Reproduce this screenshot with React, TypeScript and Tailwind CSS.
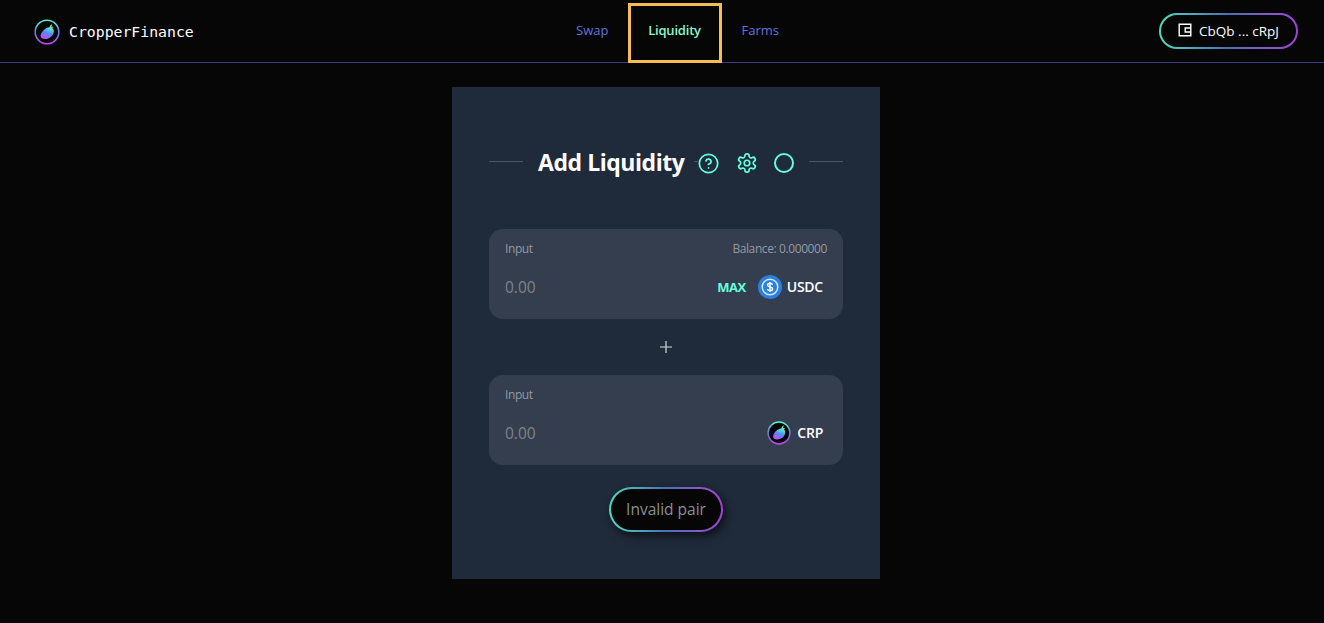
const font = "font-['Open_Sans','Noto_Sans',sans-serif]";

const Logo = ({ size, id }: { size: number; id: string }) => (
    <svg width={size} height={size} viewBox="0 0 26 26" fill="none">
        <defs>
            <linearGradient id={`${id}-ring`} x1="0" y1="0" x2="0" y2="1">
                <stop offset="0" stopColor="#5cf0c4" />
                <stop offset="0.5" stopColor="#5f80e4" />
                <stop offset="1" stopColor="#c045ee" />
            </linearGradient>
            <linearGradient id={`${id}-fruit`} x1="0.7" y1="0" x2="0.3" y2="1">
                <stop offset="0" stopColor="#66f0cc" />
                <stop offset="0.5" stopColor="#4d8cf4" />
                <stop offset="1" stopColor="#d044f0" />
            </linearGradient>
        </defs>
        <circle cx="13" cy="13" r="11.8" fill="#050505" stroke={`url(#${id}-ring)`} strokeWidth="1.6" />
        <path d="M16.4 8.2c3 .4 4 3.4 3 6.2-1.2 3.4-4.8 5.6-8.4 5.6-3 0-4.6-1.3-4.4-3.5.4-3.8 5.6-8.9 9.8-8.3z" fill={`url(#${id}-fruit)`} />
        <path d="M15.5 8.6c.1-1.6 1-2.9 2.7-3.6-.1 1.2-.4 2.1-1 2.9.8-.3 1.7-.3 2.5 0-.8 1-2.5 1.3-4.2.7z" fill="#6fe8c4" />
    </svg>
);

const GradientPill = ({ className, inner, children }: { className: string; inner: string; children: React.ReactNode }) => (
    <div className={`rounded-full bg-linear-to-r from-[#4fdcbc] via-[#4a6fb5] to-[#a23fd8] p-[2px] ${className}`}>
        <div className={`flex h-full w-full items-center justify-center rounded-full bg-[#060606] ${inner}`}>{children}</div>
    </div>
);

const Panel = ({ balance, children }: { balance?: string; children: React.ReactNode }) => (
    <div className="h-[90px] rounded-[14px] bg-[#343e4f] px-4 pt-[11px]">
        <div className="flex items-center justify-between text-[12px] leading-[18px] tracking-[-0.4px] text-[#9298a2]">
            <span>Input</span>
            {balance && <span>{balance}</span>}
        </div>
        <div className="mt-[17px] flex items-center justify-between pr-1">
            <span className="text-[15.5px] leading-[20px] text-[#7d838c]">0.00</span>
            <div className="flex items-center">{children}</div>
        </div>
    </div>
);

export default function App() {
    return (
        <div className="w-full overflow-hidden">
            <div className={`h-[623px] w-[1332px] bg-[#060606] ${font}`}>
                <header className="relative flex h-[63px] items-center justify-between border-b border-[#3c3f78] px-[34px]">
                    <div className="flex w-[160px] items-center gap-[9px] pt-[2px]">
                        <Logo size={26} id="head" />
                        <span className="font-['DejaVu_Sans_Mono',monospace] text-[14.8px] font-medium text-white">CropperFinance</span>
                    </div>
                    <nav className="flex h-[63px] items-stretch text-[13px]">
                        <a className="flex w-[72px] items-center justify-end pb-[1px] pr-[19px] text-[#6274dc]">Swap</a>
                        <a className="z-10 mt-[3px] flex h-[60px] w-[94px] items-center justify-center border-[3px] border-[#f5bd4f] pb-[4px] font-semibold tracking-[-0.2px] text-[#86f7c8]">Liquidity</a>
                        <a className="flex w-[76px] items-center pb-[1px] pl-[20px] text-[#6274dc]">Farms</a>
                    </nav>
                    <GradientPill className="h-[36px] w-[139px]" inner="gap-[7px] text-[13.5px] font-medium text-white">
                        <svg className="mb-[2px]" width="14" height="14" viewBox="0 0 14 14" fill="none" stroke="#fff" strokeWidth="1.4">
                            <path d="M1.2 1.2h11.6v11.6H1.2z" />
                            <path d="M12.8 5H7.2v4h5.6" />
                        </svg>
                        <span>CbQb ... cRpJ</span>
                    </GradientPill>
                </header>

                <main className="flex justify-center pt-[24px]">
                    <section className="h-[492px] w-[428px] bg-[#1f2a3a] px-[37px] pt-[58px]">
                        <div className="flex h-[36px] items-center">
                            <div className="mb-[3px] h-px w-[34px] bg-[#4b5563]" />
                            <h1 className="ml-[15px] w-[146px] whitespace-nowrap pb-[2px] text-[23px] font-bold leading-[34px] tracking-[-0.45px] text-white">Add Liquidity</h1>
                            <div className="mb-[3px] ml-[10px] h-px w-[4px] bg-[#4b5563]" />
                            <svg width="21" height="21" viewBox="0 0 24 24" fill="none" stroke="#64ffda" strokeWidth="2" strokeLinecap="round" strokeLinejoin="round">
                                <circle cx="12" cy="12" r="10.5" />
                                <path d="M9.1 9a3 3 0 0 1 5.8 1c0 2-3 3-3 3" />
                                <path d="M12 17h.01" />
                            </svg>
                            <svg className="ml-[17px]" width="22" height="22" viewBox="0 0 24 24" fill="none" stroke="#64ffda" strokeWidth="1.9" strokeLinecap="round" strokeLinejoin="round">
                                <path d="M12.22 2h-.44a2 2 0 0 0-2 2v.18a2 2 0 0 1-1 1.73l-.43.25a2 2 0 0 1-2 0l-.15-.08a2 2 0 0 0-2.73.73l-.22.38a2 2 0 0 0 .73 2.73l.15.1a2 2 0 0 1 1 1.72v.51a2 2 0 0 1-1 1.74l-.15.09a2 2 0 0 0-.73 2.73l.22.38a2 2 0 0 0 2.73.73l.15-.08a2 2 0 0 1 2 0l.43.25a2 2 0 0 1 1 1.73V20a2 2 0 0 0 2 2h.44a2 2 0 0 0 2-2v-.18a2 2 0 0 1 1-1.73l.43-.25a2 2 0 0 1 2 0l.15.08a2 2 0 0 0 2.73-.73l.22-.39a2 2 0 0 0-.73-2.73l-.15-.08a2 2 0 0 1-1-1.74v-.5a2 2 0 0 1 1-1.74l.15-.09a2 2 0 0 0 .73-2.73l-.22-.38a2 2 0 0 0-2.73-.73l-.15.08a2 2 0 0 1-2 0l-.43-.25a2 2 0 0 1-1-1.73V4a2 2 0 0 0-2-2z" />
                                <circle cx="12" cy="12" r="3" />
                            </svg>
                            <div className="ml-[16px] h-[20px] w-[20px] rounded-full border-2 border-[#64ffda]" />
                            <div className="mb-[3px] ml-[15px] h-px w-[34px] bg-[#4b5563]" />
                        </div>

                        <div className="mt-[48px]">
                            <Panel balance="Balance: 0.000000">
                                <span className="mr-[12px] pt-[1px] text-[13px] font-bold tracking-[-0.5px] text-[#64ffda]">MAX</span>
                                <svg width="24" height="24" viewBox="0 0 24 24" fill="none">
                                    <circle cx="12" cy="12" r="12" fill="#2b7fdd" />
                                    <circle cx="12" cy="12" r="7.8" stroke="#d6e8fb" strokeWidth="1.5" />
                                    <path d="M14.5 9.7c-.3-.9-1.2-1.4-2.5-1.4-1.5 0-2.5.8-2.5 1.8 0 2.6 5.1 1.2 5.1 3.8 0 1-1.1 1.8-2.6 1.8-1.4 0-2.4-.6-2.7-1.6M12 7v10" stroke="#fff" strokeWidth="1.4" />
                                </svg>
                                <span className="ml-[5px] pb-[2px] text-[14px] font-semibold tracking-[-0.25px] text-white">USDC</span>
                            </Panel>

                            <div className="flex h-[56px] items-center justify-center">
                                <svg width="12" height="12" viewBox="0 0 12 12" stroke="#d8dbe0" strokeWidth="1.2">
                                    <path d="M6 0v12M0 6h12" />
                                </svg>
                            </div>

                            <Panel>
                                <Logo size={24} id="token" />
                                <span className="ml-[6px] pb-[2px] text-[14px] font-semibold tracking-[-0.25px] text-white">CRP</span>
                            </Panel>
                        </div>

                        <div className="mt-[22px] flex justify-center">
                            <GradientPill className="h-[45px] w-[114px] shadow-[3px_4px_8px_rgba(0,0,0,0.6)]" inner="text-[15.5px] text-[#8b8e95]">
                                Invalid pair
                            </GradientPill>
                        </div>
                    </section>
                </main>
            </div>
        </div>
    );
}
